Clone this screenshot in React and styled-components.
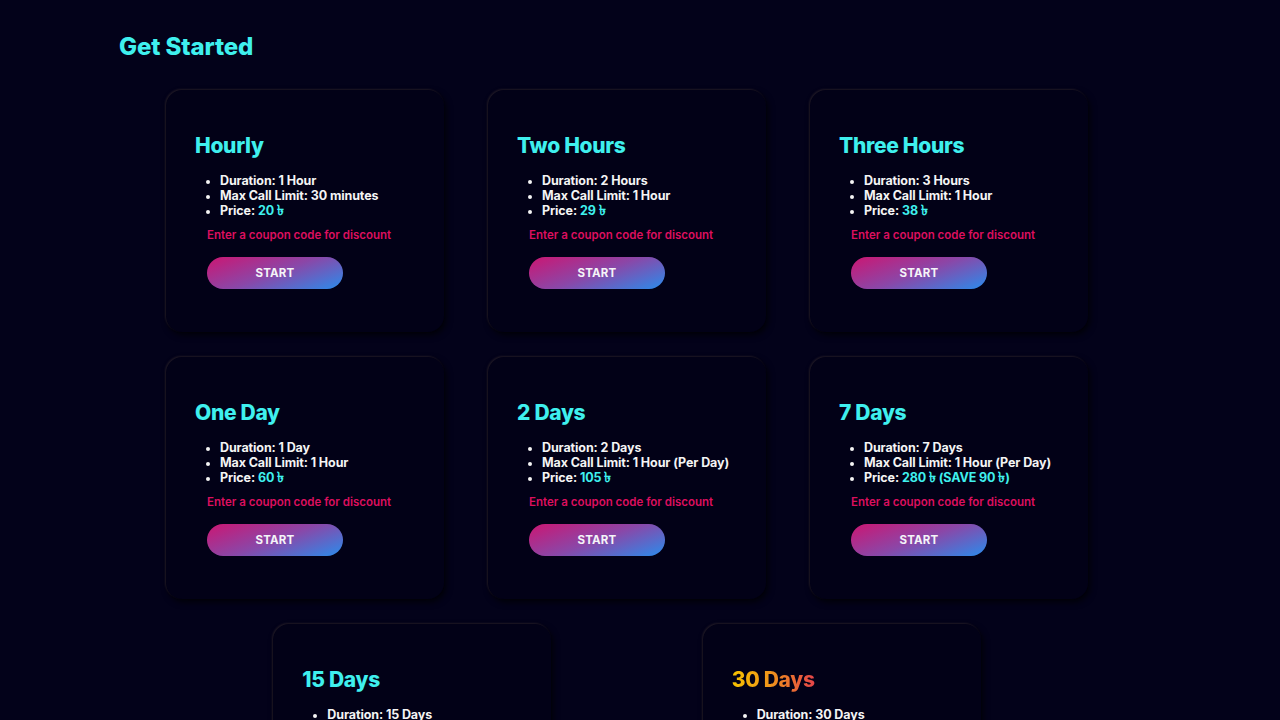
import React from "react";
import styled, { createGlobalStyle } from "styled-components";

const Global = createGlobalStyle`
  html, body { margin: 0; padding: 0; background: #03021a; }
  body { font-family: "Inter", "DejaVu Sans", sans-serif; color: #f2f2f2; overflow: hidden; }
  * { box-sizing: border-box; }
`;

const Page = styled.div`
  width: 1280px;
  min-height: 720px;
  padding: 29px 148px 0 122px;
`;

const Heading = styled.h1`
  margin: 0 0 25px -3px;
  font-size: 24px;
  line-height: 36px;
  font-weight: 800;
  color: #3ff0ee;
  letter-spacing: -0.1px;
`;

const Grid = styled.div`
  display: flex;
  flex-wrap: wrap;
  justify-content: space-evenly;
  row-gap: 25px;
`;

const Card = styled.div`
  width: 278px;
  height: 242px;
  border-radius: 16px;
  background: #020117;
  padding: 40px 20px 0 29px;
  box-shadow: -1px -1px 2px rgba(210, 180, 120, 0.14),
    2px 3px 6px rgba(0, 0, 0, 0.75);
`;

const Title = styled.h2`
  margin: 0 0 11px;
  font-size: 21px;
  line-height: 32px;
  font-weight: 800;
  color: #3ff0ee;
  letter-spacing: -0.3px;
  ${(p) =>
    p.$gold &&
    `
    background: linear-gradient(90deg, #f7c200 0%, #f0951a 45%, #e5444a 100%);
    -webkit-background-clip: text;
    background-clip: text;
    color: transparent;
    display: inline-block;
  `}
`;

const List = styled.ul`
  margin: 0 0 10px 12px;
  padding: 0 0 0 13px;
  list-style: disc;
`;

const Item = styled.li`
  font-size: 12.5px;
  line-height: 15px;
  font-weight: 700;
  color: #f4f4f4;
  letter-spacing: -0.1px;
  &::marker { font-size: 11px; }
`;

const Accent = styled.span`
  color: #3ff0ee;
`;

const Taka = styled.span`
  font-size: 14px;
  line-height: 0;
  font-weight: 800;
`;

const Coupon = styled.div`
  margin: 0 0 14px 12px;
  font-size: 11.5px;
  line-height: 15px;
  font-weight: 600;
  color: #dc0f5e;
`;

const StartButton = styled.button`
  margin-left: 12px;
  width: 136px;
  height: 32px;
  border: none;
  border-radius: 16px;
  background: linear-gradient(160deg, #cc1672 0%, #8a47a8 50%, #2a8cec 100%);
  color: #f4f4f8;
  font-family: inherit;
  font-size: 11.5px;
  font-weight: 700;
  letter-spacing: 0.2px;
  cursor: pointer;
`;

const plans = [
  { title: "Hourly", duration: "1 Hour", limit: "30 minutes", price: ["20"] },
  { title: "Two Hours", duration: "2 Hours", limit: "1 Hour", price: ["29"] },
  { title: "Three Hours", duration: "3 Hours", limit: "1 Hour", price: ["38"] },
  { title: "One Day", duration: "1 Day", limit: "1 Hour", price: ["60"] },
  { title: "2 Days", duration: "2 Days", limit: "1 Hour (Per Day)", price: ["105"] },
  { title: "7 Days", duration: "7 Days", limit: "1 Hour (Per Day)", price: ["280", " (SAVE 90 ", ")"] },
  { title: "15 Days", duration: "15 Days", limit: "1 Hour (Per Day)", price: ["550"] },
  { title: "30 Days", duration: "30 Days", limit: "1 Hour (Per Day)", price: ["1000"], gold: true },
];

function Price({ parts }) {
  return (
    <Accent>
      {parts[0]} <Taka>৳</Taka>
      {parts[1] && (
        <>
          {parts[1]}
          <Taka>৳</Taka>
          {parts[2]}
        </>
      )}
    </Accent>
  );
}

export default function App() {
  return (
    <Page>
      <Global />
      <Heading>Get Started</Heading>
      <Grid>
        {plans.map((p) => (
          <Card key={p.title}>
            <Title $gold={p.gold}>{p.title}</Title>
            <List>
              <Item>Duration: {p.duration}</Item>
              <Item>Max Call Limit: {p.limit}</Item>
              <Item>
                Price: <Price parts={p.price} />
              </Item>
            </List>
            <Coupon>Enter a coupon code for discount</Coupon>
            <StartButton>START</StartButton>
          </Card>
        ))}
      </Grid>
    </Page>
  );
}
